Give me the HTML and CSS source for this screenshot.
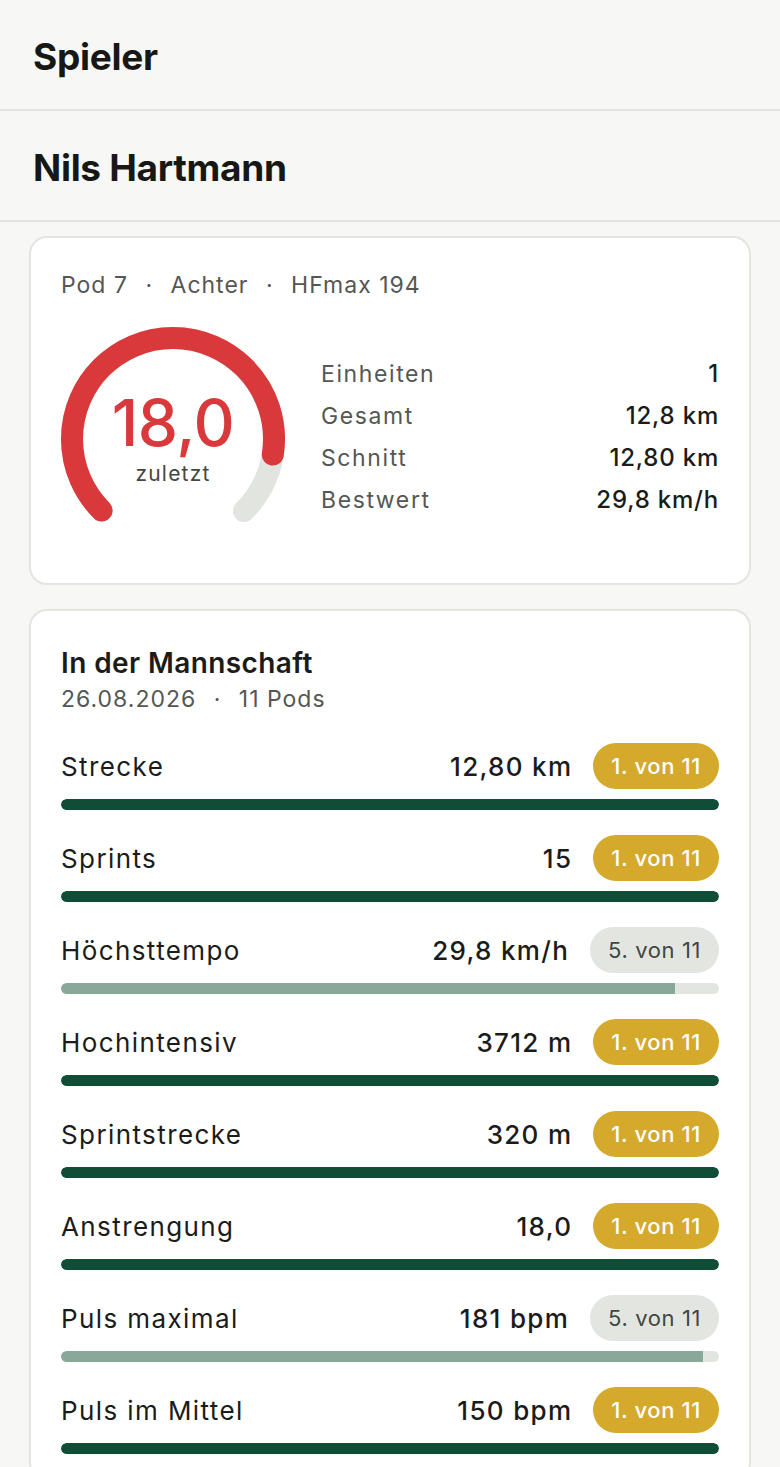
FILE: index.html
```html
<!DOCTYPE html>
<html lang="de">
<head>
  <meta charset="UTF-8">
  <meta name="viewport" content="width=device-width, initial-scale=1.0">
  <title>Spieler</title>
  <link rel="stylesheet" href="styles.css">
</head>
<body>
  <header class="topbar">
    <h1>Spieler</h1>
  </header>

  <section class="player-head">
    <h2>Nils Hartmann</h2>
  </section>

  <main class="content">
    <div class="card overview">
      <div class="meta">Pod 7 <span class="dot">·</span> Achter <span class="dot">·</span> HFmax 194</div>

      <div class="overview-body">
        <div class="gauge">
          <svg width="224" height="224" viewBox="0 0 224 224">
            <!-- 270° Bogen, Radius 101 -->
            <circle class="gauge-track" cx="112" cy="112" r="101"
              stroke-dasharray="475.9 634.6" transform="rotate(135 112 112)"></circle>
            <circle class="gauge-fill" cx="112" cy="112" r="101"
              stroke-dasharray="411.6 634.6" transform="rotate(135 112 112)"></circle>
          </svg>
          <div class="gauge-label">
            <div class="gauge-value">18,0</div>
            <div class="gauge-sub">zuletzt</div>
          </div>
        </div>

        <dl class="stats">
          <div class="stat"><dt>Einheiten</dt><dd>1</dd></div>
          <div class="stat"><dt>Gesamt</dt><dd>12,8 km</dd></div>
          <div class="stat"><dt>Schnitt</dt><dd>12,80 km</dd></div>
          <div class="stat"><dt>Bestwert</dt><dd>29,8 km/h</dd></div>
        </dl>
      </div>
    </div>

    <div class="card team">
      <h3>In der Mannschaft</h3>
      <div class="team-meta">26.08.2026 <span class="dot">·</span> 11 Pods</div>

      <ul class="ranking">
        <li class="rank-row">
          <div class="rank-line">
            <span class="rank-name">Strecke</span>
            <span class="rank-value">12,80 km</span>
            <span class="badge gold">1. von 11</span>
          </div>
          <div class="bar"><div class="bar-fill" style="width:100%"></div></div>
        </li>
        <li class="rank-row">
          <div class="rank-line">
            <span class="rank-name">Sprints</span>
            <span class="rank-value">15</span>
            <span class="badge gold">1. von 11</span>
          </div>
          <div class="bar"><div class="bar-fill" style="width:100%"></div></div>
        </li>
        <li class="rank-row">
          <div class="rank-line">
            <span class="rank-name">Höchsttempo</span>
            <span class="rank-value">29,8 km/h</span>
            <span class="badge grey">5. von 11</span>
          </div>
          <div class="bar"><div class="bar-fill muted" style="width:93.3%"></div></div>
        </li>
        <li class="rank-row">
          <div class="rank-line">
            <span class="rank-name">Hochintensiv</span>
            <span class="rank-value">3712 m</span>
            <span class="badge gold">1. von 11</span>
          </div>
          <div class="bar"><div class="bar-fill" style="width:100%"></div></div>
        </li>
        <li class="rank-row">
          <div class="rank-line">
            <span class="rank-name">Sprintstrecke</span>
            <span class="rank-value">320 m</span>
            <span class="badge gold">1. von 11</span>
          </div>
          <div class="bar"><div class="bar-fill" style="width:100%"></div></div>
        </li>
        <li class="rank-row">
          <div class="rank-line">
            <span class="rank-name">Anstrengung</span>
            <span class="rank-value">18,0</span>
            <span class="badge gold">1. von 11</span>
          </div>
          <div class="bar"><div class="bar-fill" style="width:100%"></div></div>
        </li>
        <li class="rank-row">
          <div class="rank-line">
            <span class="rank-name">Puls maximal</span>
            <span class="rank-value">181 bpm</span>
            <span class="badge grey">5. von 11</span>
          </div>
          <div class="bar"><div class="bar-fill muted" style="width:97.6%"></div></div>
        </li>
        <li class="rank-row">
          <div class="rank-line">
            <span class="rank-name">Puls im Mittel</span>
            <span class="rank-value">150 bpm</span>
            <span class="badge gold">1. von 11</span>
          </div>
          <div class="bar"><div class="bar-fill" style="width:100%"></div></div>
        </li>
      </ul>
    </div>
  </main>
</body>
</html>
```

FILE: styles.css
```css
body {
  margin: 0;
  font-family: 'Inter', 'Noto Sans', sans-serif;
  background: #f7f7f5;
  color: #1b1c1a;
}
.topbar, .player-head {
  height: 105px;
  display: flex;
  align-items: center;
  padding: 4px 33px 0;
  border-bottom: 2px solid #e3e3e0;
}
.topbar h1, .player-head h2 {
  margin: 0;
  font-size: 37px;
  font-weight: 700;
  letter-spacing: -0.3px;
  color: #171816;
}
.content {
  padding: 14px 29px 0;
}
.card {
  background: #fff;
  border: 2px solid #e4e4e0;
  border-radius: 18px;
  padding: 0 30px;
  margin-bottom: 24px;
}
.dot {
  margin: 0 10px;
}

/* Übersicht */
.overview {
  padding-top: 32px;
  padding-bottom: 32px;
}
.meta {
  font-size: 23px;
  color: #555753;
  letter-spacing: 1px;
  line-height: 30px;
}
.overview-body {
  display: flex;
  align-items: center;
  margin-top: 27px;
}
.gauge {
  position: relative;
  width: 224px;
  height: 224px;
  flex: none;
}
.gauge circle {
  fill: none;
  stroke-width: 22;
  stroke-linecap: round;
}
.gauge-track {
  stroke: #e2e4e0;
}
.gauge-fill {
  stroke: #d9393b;
}
.gauge-label {
  position: absolute;
  left: 0;
  right: 0;
  top: 64px;
  text-align: center;
}
.gauge-value {
  font-size: 64px;
  font-weight: 500;
  color: #d9393b;
  line-height: 64px;
  letter-spacing: -0.5px;
}
.gauge-sub {
  font-size: 21px;
  color: #444642;
  letter-spacing: 1.2px;
  line-height: 26px;
  margin-top: 6px;
}
.stats {
  flex: 1;
  margin: 0 0 0 36px;
  padding-bottom: 4px;
}
.stat {
  display: flex;
  justify-content: space-between;
  line-height: 42px;
}
.stat dt {
  font-size: 23px;
  color: #555753;
  letter-spacing: 1.6px;
}
.stat dd {
  margin: 0;
  font-size: 24px;
  font-weight: 500;
  color: #1b1c1a;
  letter-spacing: 0.8px;
}

/* Mannschaft */
.team {
  padding-top: 34px;
}
.team h3 {
  margin: 0;
  font-size: 28px;
  font-weight: 600;
  line-height: 36px;
  letter-spacing: 0.4px;
}
.team-meta {
  font-size: 23px;
  color: #555753;
  letter-spacing: 1px;
  line-height: 32px;
  margin-top: 2px;
}
.ranking {
  list-style: none;
  margin: 28px 0 0;
  padding: 0;
}
.rank-row {
  margin-bottom: 25px;
}
.rank-line {
  display: flex;
  align-items: center;
  height: 46px;
}
.rank-name {
  flex: 1;
  font-size: 26px;
  letter-spacing: 1.4px;
  color: #1b1c1a;
}
.rank-value {
  font-size: 26px;
  font-weight: 500;
  letter-spacing: 1.3px;
  margin-right: 21px;
}
.badge {
  height: 46px;
  line-height: 46px;
  padding: 0 18px;
  border-radius: 23px;
  font-size: 22px;
  letter-spacing: 0.6px;
}
.badge.gold {
  background: #d4a92c;
  color: #fff;
  font-weight: 500;
}
.badge.grey {
  background: #e3e5e1;
  color: #444642;
}
.bar {
  margin-top: 10px;
  height: 11px;
  border-radius: 6px;
  background: #e3e5e1;
  overflow: hidden;
}
.bar-fill {
  height: 100%;
  background: #0f4d37;
  border-radius: 6px 0 0 6px;
}
.bar-fill[style="width:100%"] {
  border-radius: 6px;
}
.bar-fill.muted {
  background: #8aa89a;
}
```
